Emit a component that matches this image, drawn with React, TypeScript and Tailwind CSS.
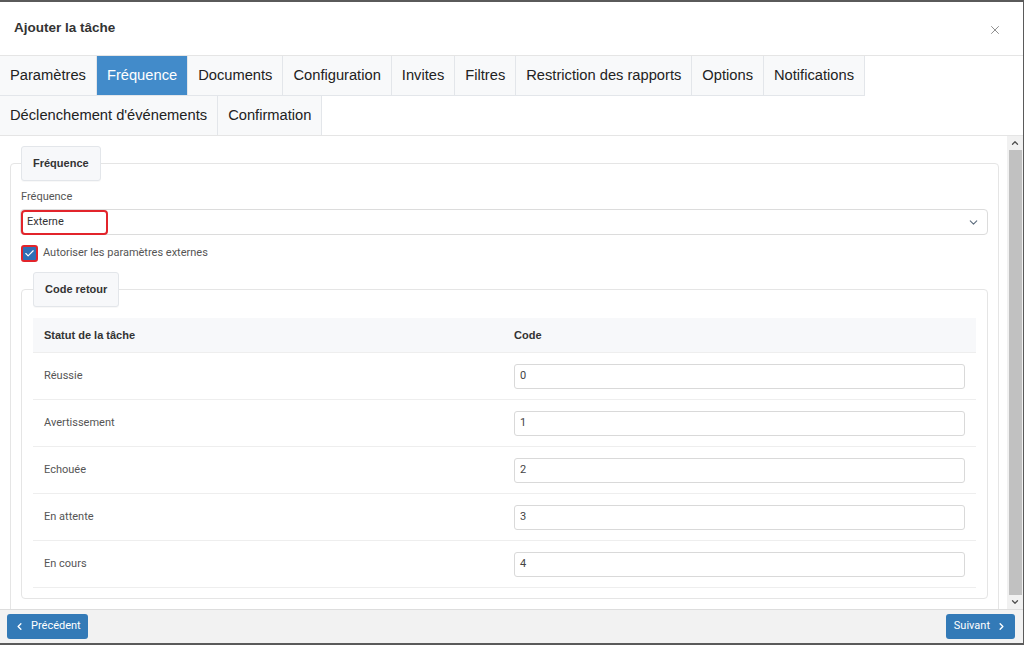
import { ChevronDown, ChevronLeft, ChevronRight, X, Check, ChevronUp } from "lucide-react"

const row1 = ["Paramètres", "Fréquence", "Documents", "Configuration", "Invites", "Filtres", "Restriction des rapports", "Options", "Notifications"]
const row2 = ["Déclenchement d'événements", "Confirmation"]

const statuts = [
  { label: "Réussie", code: "0" },
  { label: "Avertissement", code: "1" },
  { label: "Echouée", code: "2" },
  { label: "En attente", code: "3" },
  { label: "En cours", code: "4" },
]

const roboto = { fontFamily: 'Roboto, "Liberation Sans", sans-serif' }

const Tab = ({ name, active, last }: { name: string; active?: boolean; last?: boolean }) => (
  <div
    className={
      "px-[10px] flex items-center text-[14.7px] border-r border-[#e3e6ea] " +
      (last ? "h-[39px] " : "h-[40px] border-b ") +
      (active ? "bg-[#428bca] text-white" : "bg-[#f8f9fa] text-[#222]")
    }
  >
    {name}
  </div>
)

const Legend = ({ children }: { children: string }) => (
  <legend className="h-[35px] px-[11px] flex items-center bg-[#f7f8fa] border border-[#e3e6ea] rounded-[3px] text-[11px] font-bold text-[#333] shadow-[0_1px_1px_rgba(0,0,0,0.03)]">
    {children}
  </legend>
)

export default function App() {
  return (
    <div
      className="w-[1024px] h-[645px] flex flex-col bg-white border-t-2 border-b-2 border-r border-[#5a5a5a] overflow-hidden text-[#333]"
      style={{ fontFamily: '"Liberation Sans", Arial, sans-serif' }}
    >
      <div className="h-[54px] shrink-0 flex items-center justify-between pl-[14px] pr-[21px] border-b border-[#e5e5e5]">
        <h4 className="text-[13.5px] font-bold text-[#333] -mt-px">Ajouter la tâche</h4>
        <X size={14} strokeWidth={1.6} className="text-[#888] mt-[2px]" />
      </div>

      <div className="shrink-0 border-b border-[#e5e5e5]">
        <div className="flex">
          {row1.map((t) => (
            <Tab key={t} name={t} active={t === "Fréquence"} />
          ))}
        </div>
        <div className="flex">
          {row2.map((t) => (
            <Tab key={t} name={t} last />
          ))}
        </div>
      </div>

      <div className="flex flex-1 min-h-0">
        <div className="flex-1 overflow-hidden pt-[10px] pl-[10px] pr-[8px]">
          <fieldset className="border border-[#e5e5e5] rounded-[4px] px-[10px] pb-[20px]">
            <Legend>Fréquence</Legend>
            <label className="block mt-[9px] text-[11px] leading-[14px] text-[#555]" style={roboto}>
              Fréquence
            </label>
            <div className="relative mt-[5px] -ml-px h-[26px] border border-[#dcdcdc] rounded-[4px] flex items-center justify-between pl-[6px] pr-[7px]">
              <span className="text-[11px] text-[#333]" style={roboto}>Externe</span>
              <ChevronDown size={13} strokeWidth={2} className="text-[#5d6d7e]" />
              <div className="absolute left-0 top-0 w-[87px] h-[25px] border-2 border-[#e2242b] rounded-[4px]" />
            </div>
            <div className="mt-[10px] flex items-center gap-[5px] h-[17px]">
              <div className="w-[17px] h-[17px] rounded-[3px] border-2 border-[#e2242b] bg-[#2f6fb6] flex items-center justify-center">
                <Check size={11} strokeWidth={2.5} className="text-white" />
              </div>
              <span className="text-[11px] text-[#555]" style={roboto}>Autoriser les paramètres externes</span>
            </div>

            <fieldset className="mt-[10px] border border-[#e5e5e5] rounded-[4px] px-[11px] pb-[10px]">
              <Legend>Code retour</Legend>
              <div className="mt-[11px]">
                <div className="flex h-[35px] items-center bg-[#f7f8fa] border-b border-[#eeeeee] text-[11px] font-bold text-[#333]">
                  <div className="w-[470px] pl-[11px]">Statut de la tâche</div>
                  <div className="flex-1 pl-[11px]">Code</div>
                </div>
                {statuts.map((s) => (
                  <div key={s.label} className="flex h-[47px] items-center border-b border-[#eeeeee] text-[11px] text-[#555]" style={roboto}>
                    <div className="w-[470px] pl-[11px]">{s.label}</div>
                    <div className="flex-1 pl-[11px] pr-[11px]">
                      <div className="h-[25px] border border-[#d9d9d9] rounded-[3px] flex items-center pl-[5px] text-[11px] text-[#444]">
                        {s.code}
                      </div>
                    </div>
                  </div>
                ))}
              </div>
            </fieldset>
          </fieldset>
        </div>

        <div className="w-[16px] shrink-0 bg-[#f1f1f1] flex flex-col items-center">
          <div className="h-[14px] flex items-center justify-center">
            <ChevronUp size={10} strokeWidth={3} className="text-[#505050]" />
          </div>
          <div className="flex-1 w-[13px] bg-[#c1c1c1]" />
          <div className="h-[14px] flex items-center justify-center">
            <ChevronDown size={10} strokeWidth={3} className="text-[#505050]" />
          </div>
        </div>
      </div>

      <div className="h-[34px] shrink-0 bg-[#f2f2f2] border-t border-[#dddddd] flex items-center justify-between pl-[7px] pr-[8px]">
        <button className="h-[25px] px-[7px] rounded-[3px] bg-[#337ab7] text-white text-[11px] flex items-center gap-[6px]" style={roboto}>
          <ChevronLeft size={11} strokeWidth={3} />
          Précédent
        </button>
        <button className="h-[25px] px-[8px] rounded-[3px] bg-[#337ab7] text-white text-[11px] flex items-center gap-[6px]" style={roboto}>
          Suivant
          <ChevronRight size={11} strokeWidth={3} />
        </button>
      </div>
    </div>
  )
}
